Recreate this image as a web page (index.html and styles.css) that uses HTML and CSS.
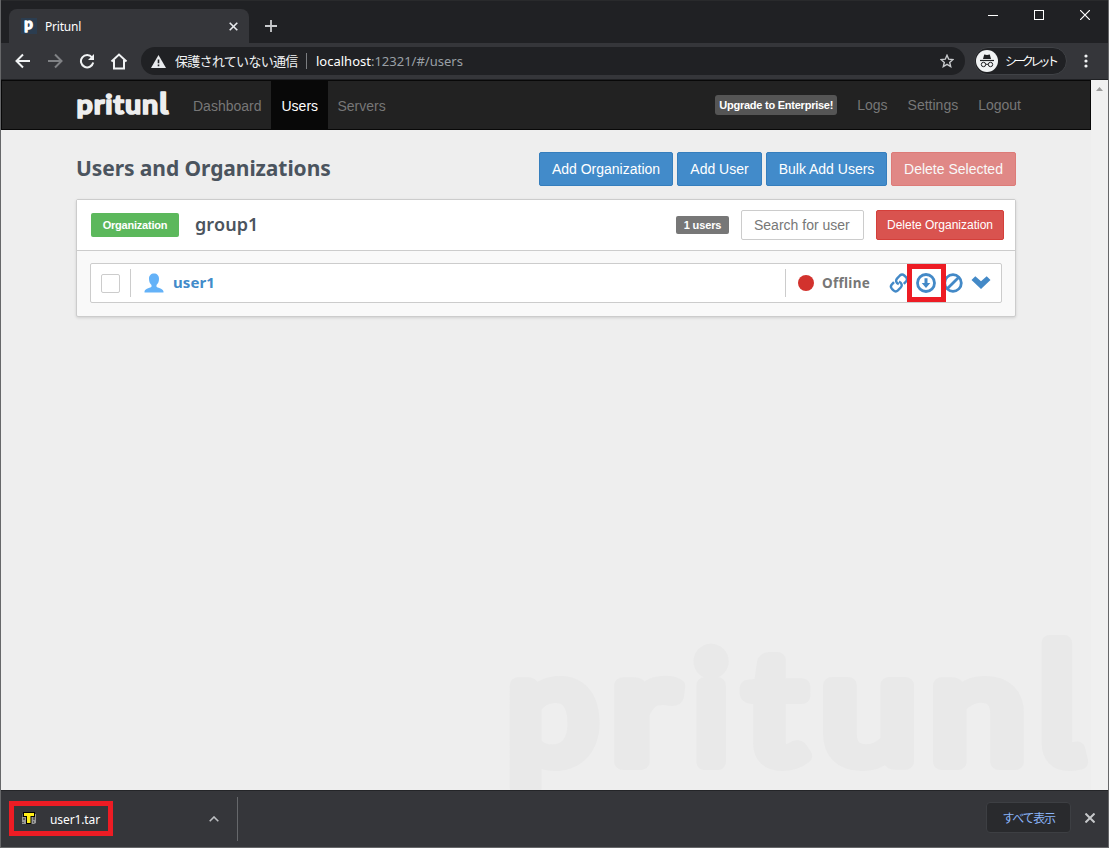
FILE: index.html
```html
<!DOCTYPE html>
<html lang="ja">
<head>
<meta charset="utf-8">
<title>Pritunl</title>
<link rel="stylesheet" href="styles.css">
</head>
<body>
<div class="window">
  <header class="tabstrip">
    <div class="tab">
      <svg class="favicon" width="16" height="16" viewBox="0 0 16 16"><rect width="16" height="16" fill="#2b3d50"/><text x="3.300" y="11" class="favicon-letter">p</text></svg>
      <span class="tab-title">Pritunl</span>
      <svg width="9" height="9" viewBox="0 0 9 9"><path d="M.7.7l7.600 7.600M8.300.7L.7 8.300" stroke="#e8eaed" stroke-width="1.600"/></svg>
    </div>
    <svg class="new-tab" width="12" height="12" viewBox="0 0 12 12"><path d="M6 0v12M0 6h12" stroke="#c9cbce" stroke-width="1.800"/></svg>
    <div class="controls">
      <svg width="10" height="10"><path d="M0 5.500h10" stroke="#fff"/></svg>
      <svg width="10" height="10"><rect x=".5" y=".5" width="9" height="9" fill="none" stroke="#fff"/></svg>
      <svg width="10" height="10"><path d="M0 0l10 10M10 0L0 10" stroke="#fff" stroke-width="1.200"/></svg>
    </div>
  </header>
  <div class="toolbar">
    <svg class="tool" width="16" height="16" viewBox="0 0 16 16"><path d="M15 8H2M8 1.500L1.500 8 8 14.500" fill="none" stroke="#f1f3f4" stroke-width="2"/></svg>
    <svg class="tool" width="16" height="16" viewBox="0 0 16 16"><path d="M1 8h13M8 1.500l6.500 6.500L8 14.500" fill="none" stroke="#808285" stroke-width="2"/></svg>
    <svg class="tool" width="16" height="16" viewBox="0 0 16 16"><path d="M13 4.300A6.200 6.200 0 1 0 14.200 9.500" fill="none" stroke="#f1f3f4" stroke-width="2"/><path d="M15 1v6H9z" fill="#f1f3f4"/></svg>
    <svg class="tool" width="18" height="17" viewBox="0 0 18 17"><path d="M1.500 8.500L9 1.500l7.500 7M4 7v8.500h10V7" fill="none" stroke="#f1f3f4" stroke-width="2"/></svg>
    <div class="omnibox">
      <svg width="15" height="13" viewBox="0 0 15 13"><path d="M7.500 0L15 13H0z" fill="#e8eaed"/><path d="M7.500 4.500v3.700M7.500 9.500v1.800" stroke="#202124" stroke-width="1.600"/></svg>
      <span class="insecure">保護されていない通信</span>
      <span class="url"><b>localhost</b>:12321/#/users</span>
      <svg class="star" width="14" height="14" viewBox="0 0 14 14"><path d="M7 1.300l1.700 3.900 4.200.4-3.200 2.800 1 4.200L7 10.400l-3.700 2.200 1-4.200L1.100 5.600l4.200-.4z" fill="none" stroke="#c8cacd" stroke-width="1.400"/></svg>
    </div>
    <div class="incognito">
      <svg width="22" height="22" viewBox="0 0 22 22"><circle cx="11" cy="11" r="11" fill="#f1f3f4"/><path d="M7 9l1.200-4.500 2.800.5 2.800-.5L15 9z" fill="#202124"/><path d="M4 10.500h14" stroke="#202124" stroke-width="1.200"/><g fill="none" stroke="#202124"><circle cx="7.500" cy="14.500" r="2.200"/><circle cx="14.500" cy="14.500" r="2.200"/><path d="M9.700 14.300h2.600"/></g></svg>
      <span>シークレット</span>
    </div>
    <svg class="kebab" width="4" height="14" viewBox="0 0 4 14" fill="#f1f3f4"><circle cx="2" cy="2" r="1.600"/><circle cx="2" cy="7" r="1.600"/><circle cx="2" cy="12" r="1.600"/></svg>
  </div>
  <div class="viewport">
    <main class="page">
      <nav class="navbar">
        <svg class="brand" width="92" height="38" viewBox="0 0 92 38"><text class="brand-text" x=".5" y="27.500" textLength="92" lengthAdjust="spacingAndGlyphs">pritun<tspan class="tailed">l</tspan></text></svg>
        <a class="nav-link dash">Dashboard</a>
        <a class="nav-link active">Users</a>
        <a class="nav-link">Servers</a>
        <span class="upgrade">Upgrade to Enterprise!</span>
        <a class="nav-right">Logs</a>
        <a class="nav-right">Settings</a>
        <a class="nav-right">Logout</a>
      </nav>
      <div class="container">
        <div class="heading">
          <h1>Users and Organizations</h1>
          <button class="btn w134">Add Organization</button>
          <button class="btn w85">Add User</button>
          <button class="btn w121">Bulk Add Users</button>
          <button class="btn danger faded w125">Delete Selected</button>
        </div>
        <section class="org">
          <div class="org-head">
            <span class="org-label">Organization</span>
            <h2>group1</h2>
            <span class="count">1 users</span>
            <span class="search">Search for user</span>
            <button class="btn danger small">Delete Organization</button>
          </div>
          <div class="org-body">
            <div class="user">
              <span class="checkbox"></span>
              <span class="rule"></span>
              <svg class="avatar" width="20" height="20" viewBox="0 0 20 20"><path d="M10 .5c3 0 5 2 5 5.300 0 2.700-.9 4.900-2.500 6.200v1.800c.3 1 6.300 1.500 7 4.700v1H.5v-1c.7-3.200 6.700-3.700 7-4.700V12C5.900 10.700 5 8.500 5 5.800 5 2.500 7 .5 10 .5z" fill="#64b2f8"/></svg>
              <a class="user-name">user1</a>
              <span class="rule status-rule"></span>
              <span class="dot"></span>
              <span class="status">Offline</span>
              <div class="actions">
                <svg width="20" height="20" viewBox="0 0 20 20" fill="none" stroke="#4389c7" stroke-width="2.400" stroke-linejoin="round"><path d="M9.800 11.200C7 10 6.300 7.400 8.200 5.400l2.700-2.900c1.400-1.300 3-1.300 4.400 0l1.700 1.600c1.300 1.400 1.300 3 0 4.400l-2.200 2.300"/><path d="M10 8.700c2.800 1.200 3.600 3.800 1.700 5.800l-2.800 2.900c-1.400 1.300-3 1.300-4.400 0l-1.600-1.600c-1.300-1.400-1.300-3 0-4.400l2.100-2.200"/></svg>
                <svg width="20" height="20" viewBox="0 0 20 20"><circle cx="10" cy="10" r="8.500" fill="none" stroke="#4389c7" stroke-width="2.800"/><path d="M8.500 5.300h3V10h2.800L10 15 5.700 10h2.800z" fill="#4389c7"/></svg>
                <svg width="20" height="20" viewBox="0 0 20 20"><g fill="none" stroke="#4389c7" stroke-width="2.800"><circle cx="10" cy="10" r="8.300"/><path d="M4.200 15.800L15.800 4.200"/></g></svg>
                <svg class="expand" width="20" height="20" viewBox="0 0 20 20"><path d="M.5 7L4.300 3.200 10 8.300l5.700-5.100L19.500 7 10 16z" fill="#4389c7"/></svg>
                <span class="marker"></span>
              </div>
            </div>
          </div>
        </section>
      </div>
      <svg class="watermark" width="590" height="165" viewBox="500 625 590 165">
        <g class="wm-text">
          <text x="506" y="761.500" textLength="91" lengthAdjust="spacingAndGlyphs">p</text>
          <text x="610" y="761.500" textLength="66" lengthAdjust="spacingAndGlyphs">r</text>
          <text x="692" y="761.500">i</text>
          <text x="744" y="761.500" textLength="60" lengthAdjust="spacingAndGlyphs">t</text>
          <text x="820" y="761.500" textLength="96" lengthAdjust="spacingAndGlyphs">u</text>
          <text x="929" y="761.500" textLength="96" lengthAdjust="spacingAndGlyphs">n</text>
          <text class="tailed" x="1036" y="761.500">l</text>
        </g>
      </svg>
    </main>
    <div class="scrollbar"><svg width="7" height="4"><path d="M0 4L3.500 0 7 4z" fill="#9b9b9b"/></svg></div>
  </div>
  <footer class="shelf">
    <div class="download">
      <svg width="16" height="12" viewBox="0 0 16 12"><path d="M1 2h14v9l-2 1H1z" fill="#999"/><path d="M1 2v3M3 6v2M2 10v1M13 5v3M12 10h1" fill="none" stroke="#222"/><path d="M2 0h12v5h-3.500v7H5V5H2z" fill="#000"/><path d="M3 1h10v3H9.500v7H6V4H3z" fill="#ffee18"/></svg>
      <span>user1.tar</span>
    </div>
    <svg class="chev" width="10" height="6" viewBox="0 0 10 6"><path d="M.7 5.300L5 1l4.300 4.300" fill="none" stroke="#bcbec1" stroke-width="1.600"/></svg>
    <span class="shelf-rule"></span>
    <button class="show-all">すべて表示</button>
    <svg class="shelf-close" width="10" height="10" viewBox="0 0 10 10"><path d="M.5.5l9 9M9.500.5l-9 9" stroke="#c6c8ca" stroke-width="2"/></svg>
  </footer>
</div>
</body>
</html>
```

FILE: styles.css
```css
* { box-sizing: border-box; }
body { margin: 0; background: #35363a; }
svg { display: block; flex: none; }
button { padding: 0; }
.window { width: 1109px; height: 848px; display: flex; flex-direction: column; border: solid #666769; border-width: 0 1px 1px; overflow: hidden; font-family: "Liberation Sans", Arial, sans-serif; white-space: nowrap; }

.tabstrip { height: 43px; flex: none; display: flex; background: #202124; border-top: 1px solid #292a2c; }
.tab { width: 240px; height: 34px; margin: 8px 0 0 8px; padding: 0 11.5px 0 12px; display: flex; align-items: center; background: #35363a; border-radius: 8px 8px 0 0; }
.favicon { overflow: visible; }
.favicon-letter { font: 700 15px Lato, sans-serif; fill: #fff; stroke: #fff; stroke-width: 1.3px; stroke-linejoin: round; }
.tab-title { flex: 1; margin-left: 8px; color: #fff; font: 12px "Noto Sans", sans-serif; letter-spacing: -.2px; }
.new-tab { margin: 19px 0 0 16px; }
.controls { margin: 9px 18px 0 auto; display: flex; gap: 36px; }

.toolbar { height: 37px; flex: none; display: flex; align-items: center; padding-left: 14px; background: #35363a; border-bottom: 1px solid #202124; }
.tool { margin-right: 16px; }
.tool:nth-child(4) { margin: 0 13px 0 -1px; }
.omnibox { width: 824px; height: 28px; display: flex; align-items: center; padding: 0 11px 0 10px; border-radius: 14px; background: #202124; }
.insecure { width: 123px; margin: 0 0 2px 9px; color: #f1f3f4; font: 13px "Noto Sans CJK JP", sans-serif; letter-spacing: -.7px; }
.url { margin-left: 8px; padding-left: 9px; line-height: 16px; border-left: 1px solid #7b7d80; color: #9aa0a6; font-family: "Noto Sans", sans-serif; font-size: 13px; }
.url b { color: #fff; font-weight: 400; }
.star { margin-left: auto; }
.incognito { width: 93px; height: 28px; margin-left: 9px; padding-left: 1px; display: flex; align-items: center; border: 1px solid #404246; border-radius: 14px; background: #202124; color: #fff; font: 12px "Noto Sans CJK JP", sans-serif; letter-spacing: -3.600px; }
.incognito span { margin: 0 0 1px 7px; }
.kebab { margin-left: 17px; }

.viewport { height: 710px; flex: none; display: flex; background: #eee; }
.page { width: 1090px; position: relative; }
.navbar { height: 50px; display: flex; align-items: center; padding: 0 69px 0 74px; background: #222; border: 1px solid #080808; color: #777; font-size: 14px; }
.brand { overflow: visible; }
.brand-text { font: 700 27px Lato, sans-serif; fill: #eee; stroke: #eee; stroke-width: 1.7px; stroke-linejoin: round; letter-spacing: .8px; }
.brand-text .tailed { font: 600 30px Inter, sans-serif; font-feature-settings: "cv05", "ss02"; letter-spacing: 0; }
.nav-link { height: 48px; line-height: 50px; padding: 0 10px; }
.dash { margin-left: 15px; }
.active { width: 57px; margin-left: -1px; padding-left: 11px; background: #080808; color: #fff; }
.upgrade { width: 122px; height: 20px; margin: 0 0 1px auto; line-height: 20px; text-align: center; background: #555; border-radius: 3px; color: #fff; font-size: 11px; font-weight: 700; letter-spacing: -.24px; }
.nav-right { margin-left: 20px; line-height: 50px; }
.container { width: 940px; margin: 22px 0 0 75px; }
.heading { height: 34px; display: flex; gap: 4px; }
h1 { flex: 1; margin: 0; color: #4b545e; font: 700 21px/32px "Noto Sans", sans-serif; letter-spacing: -.08px; }
.btn { height: 34px; border: 1px solid #357ebd; border-radius: 2px; background: #428bca; color: #fff; font: 14px "Liberation Sans", Arial, sans-serif; }
.w134 { width: 134px; } .w85 { width: 85px; } .w121 { width: 121px; } .w125 { width: 125px; }
.danger { background: #d9534f; border-color: #d43f3a; }
.faded { opacity: .65; }
.org { margin-top: 13px; border: 1px solid #ccc; border-radius: 2px; background: #f9f9f9; box-shadow: 0 1px 3px rgba(0,0,0,.13); }
.org-head { height: 51px; display: flex; align-items: center; padding: 0 11px 0 14px; background: #fff; border-bottom: 1px solid #ccc; }
.org-label { width: 88px; height: 24px; line-height: 24px; text-align: center; background: #5cb85c; border-radius: 2px; color: #fff; font-size: 11px; font-weight: 700; letter-spacing: -.22px; }
h2 { margin: 0 0 2px 16px; color: #4b545e; font: 600 18px/24px "Noto Sans", sans-serif; letter-spacing: .1px; }
.count { width: 53px; height: 18px; line-height: 18px; margin-left: auto; text-align: center; background: #777; border-radius: 2px; color: #fff; font-size: 11px; font-weight: 700; letter-spacing: -.15px; }
.search { width: 123px; height: 30px; margin: 0 12px; padding-left: 12px; line-height: 28px; background: #fff; border: 1px solid #ccc; border-radius: 2px; color: #777; font-size: 14px; }
.small { width: 128px; height: 30px; font-size: 12px; }
.org-body { padding: 12px 13px 13px; }
.user { height: 40px; display: flex; align-items: center; padding-left: 10px; background: #fff; border: 1px solid #ccc; border-radius: 2px; }
.checkbox { width: 19px; height: 19px; border: 1px solid #ccc; border-radius: 2px; }
.rule { width: 1px; height: 28px; margin-left: 10px; background: #ccc; }
.avatar { margin-left: 13px; }
.user-name { margin: 0 0 2px 9px; color: #428bca; font: 700 15px "Noto Sans", sans-serif; letter-spacing: .1px; }
.status-rule { margin-left: auto; }
.dot { width: 16px; height: 16px; margin-left: 12px; border-radius: 50%; background: #d2322d; }
.status { width: 49px; margin-left: 8px; color: #777; font: 700 13.5px "Noto Sans", sans-serif; letter-spacing: .3px; }
.actions { position: relative; display: flex; gap: 7px; margin: 0 10px 0 18px; }
.expand { margin-left: 1px; }
.marker { position: absolute; left: 18px; top: -9px; width: 39px; height: 38px; border: 5px solid #ed1c24; }
.watermark { position: absolute; right: 0; bottom: 0; }
.wm-text { font: 400 151px Lato, sans-serif; fill: #e9e9e9; stroke: #e9e9e9; stroke-width: 16px; stroke-linejoin: round; }
.wm-text .tailed { font: 400 164px Inter, sans-serif; font-feature-settings: "cv05", "ss02"; }
.scrollbar { width: 17px; display: flex; justify-content: center; padding-top: 7px; background: #f0f0f0; }

.shelf { height: 57px; flex: none; display: flex; align-items: center; padding-right: 13px; border-top: 1px solid #242528; background: #35363a; }
.download { width: 104px; height: 35px; margin: 0 0 2px 8px; padding-left: 7px; display: flex; align-items: center; border: 5px solid #ed1c24; color: #fff; font: 12px "Noto Sans", sans-serif; letter-spacing: -.1px; }
.download span { margin: 2px 0 0 13px; }
.chev { margin-left: 96px; }
.shelf-rule { width: 1px; height: 44px; margin-left: 18px; background: #66686b; }
.show-all { width: 85px; height: 31px; margin: 0 14px 3px auto; border: 1px solid #3d3f43; border-radius: 4px; background: #292a2d; color: #8ab4f8; font: 12px "Noto Sans CJK JP", sans-serif; letter-spacing: -1.300px; }
.shelf-close { margin-bottom: 2px; }
```
